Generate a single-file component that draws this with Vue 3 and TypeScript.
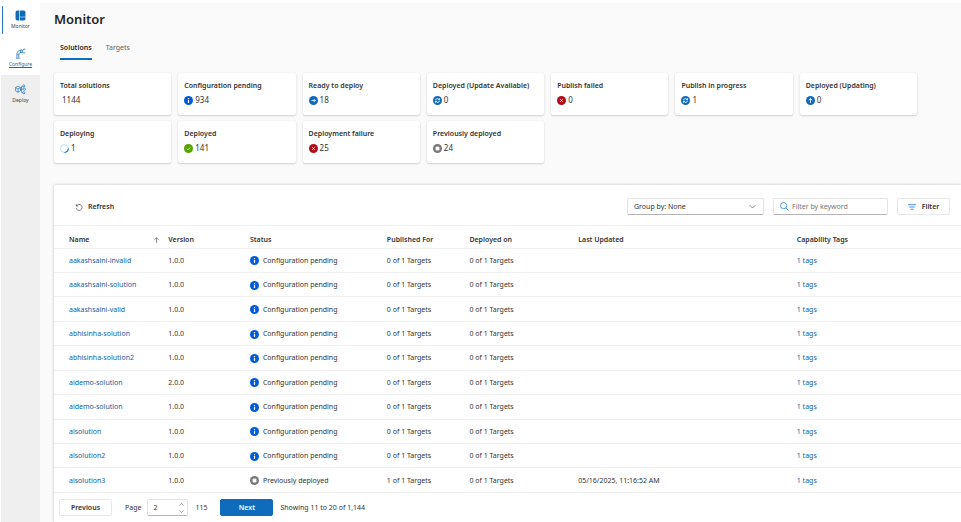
<script setup lang="ts">
import { ref } from 'vue'

type IconName = 'info' | 'arrow' | 'sync' | 'error' | 'up' | 'spinner' | 'check' | 'stopped'

interface Card {
  label: string
  value: number
  icon?: IconName
}

interface Solution {
  name: string
  version: string
  status: string
  icon: IconName
  published: string
  deployed: string
  updated: string
}

const cards: Card[] = [
  { label: 'Total solutions', value: 1144 },
  { label: 'Configuration pending', value: 934, icon: 'info' },
  { label: 'Ready to deploy', value: 18, icon: 'arrow' },
  { label: 'Deployed (Update Available)', value: 0, icon: 'sync' },
  { label: 'Publish failed', value: 0, icon: 'error' },
  { label: 'Publish in progress', value: 1, icon: 'sync' },
  { label: 'Deployed (Updating)', value: 0, icon: 'up' },
  { label: 'Deploying', value: 1, icon: 'spinner' },
  { label: 'Deployed', value: 141, icon: 'check' },
  { label: 'Deployment failure', value: 25, icon: 'error' },
  { label: 'Previously deployed', value: 24, icon: 'stopped' },
]

const pending = (name: string, version = '1.0.0'): Solution => ({
  name,
  version,
  status: 'Configuration pending',
  icon: 'info',
  published: '0 of 1 Targets',
  deployed: '0 of 1 Targets',
  updated: '',
})

const solutions: Solution[] = [
  pending('aakashsaini-invalid'),
  pending('aakashsaini-solution'),
  pending('aakashsaini-valid'),
  pending('abhisinha-solution'),
  pending('abhisinha-solution2'),
  pending('aidemo-solution', '2.0.0'),
  pending('aidemo-solution'),
  pending('aisolution'),
  pending('aisolution2'),
  {
    name: 'aisolution3',
    version: '1.0.0',
    status: 'Previously deployed',
    icon: 'stopped',
    published: '1 of 1 Targets',
    deployed: '0 of 1 Targets',
    updated: '05/16/2025, 11:16:52 AM',
  },
]

const colors: Record<IconName, string> = {
  info: '#015cda',
  arrow: '#0f6cbd',
  sync: '#0f6cbd',
  error: '#b10e1c',
  up: '#0f6cbd',
  spinner: 'none',
  check: '#57a300',
  stopped: '#7a7a7a',
}

const glyphs: Record<IconName, string> = {
  info: 'M9 7.6V14M9 4v2',
  arrow: 'M5 9h7.5M9.5 6l3 3-3 3',
  sync: 'M5 8.5c.5-4 6-4.500 7.500-1.200M13 4.500v3h-3M13 9.500c-.5 4-6 4.500-7.500 1.200M5 13.500v-3h3',
  error: 'M6.300 6.300l5.400 5.400M11.700 6.300l-5.400 5.400',
  up: 'M9 14V5M5.500 8.500L9 5l3.500 3.500',
  spinner: '',
  check: 'M5.500 9.300l2.400 2.400 4.600-4.800',
  stopped: 'M6 6h6v6H6z',
}

const groupBy = ref('none')
const keyword = ref('')
const page = ref(2)
const step = (delta: number) => {
  page.value = Math.min(115, Math.max(1, page.value + delta))
}
</script>

<template>
  <div class="app">
    <nav class="sidebar" aria-label="Primary">
      <a class="nav-item active" href="#monitor">
        <svg viewBox="0 0 20 20" fill="#0f6cbd">
          <path d="M4 1h3.500v18H4a3 3 0 0 1-3-3V4a3 3 0 0 1 3-3zM8.700 1H16a3 3 0 0 1 3 3v8.200H8.700zM8.700 13.400H19V16a3 3 0 0 1-3 3H8.700z" />
        </svg>
        <span>Monitor</span>
      </a>
      <a class="nav-item hovered" href="#configure">
        <svg viewBox="0 0 20 20" fill="none" stroke="#0f6cbd" stroke-width="1.300">
          <path d="M2 18.500h6.500M3.500 18v-6.500C3.500 7 6 4.500 10 4.500M7 18v-5.500C7 9.500 8.500 8 11 7.500M3.500 12H7M10 3.500h3v5h-3zM13 5l3-3h3M13 7l3 2h3M16 2v2" />
        </svg>
        <span>Configure</span>
      </a>
      <a class="nav-item" href="#deploy">
        <svg viewBox="0 0 20 20" fill="none" stroke="#0f6cbd" stroke-width="1.200">
          <path d="M1 6.500L5.500 4 10 6.500v6L5.500 15 1 12.500zM1 6.500L5.500 9 10 6.500M5.500 9v6M10 9.500h4M12 9.500V4.500h2M12 9.500v6h2" />
          <circle cx="16" cy="3.500" r="2" /><circle cx="17" cy="9.500" r="2" /><circle cx="16" cy="16" r="2" />
        </svg>
        <span>Deploy</span>
      </a>
    </nav>

    <main class="main">
      <h1>Monitor</h1>
      <div class="tabs" role="tablist">
        <button class="tab selected" role="tab" aria-selected="true">Solutions</button>
        <button class="tab" role="tab" aria-selected="false">Targets</button>
      </div>

      <section class="cards">
        <article v-for="card in cards" :key="card.label" class="card">
          <h2>{{ card.label }}</h2>
          <div class="value" :class="{ plain: !card.icon }">
            <svg v-if="card.icon" class="status-icon" viewBox="0 0 18 18">
              <template v-if="card.icon === 'spinner'">
                <circle cx="9" cy="9" r="8" fill="none" stroke="#b4d6fa" stroke-width="1.800" />
                <path d="M17 9A8 8 0 0 1 9 17" fill="none" stroke="#0f6cbd" stroke-width="2" />
              </template>
              <template v-else>
                <circle cx="9" cy="9" r="9" :fill="colors[card.icon]" />
                <path :d="glyphs[card.icon]" class="glyph" :class="card.icon" />
              </template>
            </svg>
            <span>{{ card.value }}</span>
          </div>
        </article>
      </section>

      <section class="panel">
        <div class="toolbar">
          <button class="refresh">
            <svg viewBox="0 0 16 16" fill="none" stroke="#424242" stroke-width="1.300">
              <path d="M2.500 2v4h4M3 5.800A6 6 0 1 1 2.300 10" />
            </svg>
            Refresh
          </button>
          <div class="select-box">
            <select v-model="groupBy" aria-label="Group by">
              <option value="none">Group by: None</option>
              <option value="status">Group by: Status</option>
            </select>
            <svg class="chevron" viewBox="0 0 16 10" fill="none" stroke="#616161" stroke-width="1.600"><path d="M1 1.500l7 7 7-7" /></svg>
          </div>
          <label class="search">
            <svg viewBox="0 0 16 16" fill="none" stroke="#2b88d8" stroke-width="1.500">
              <circle cx="6.500" cy="6.500" r="5.500" /><path d="M10.500 10.500L15.500 15.500" />
            </svg>
            <input v-model="keyword" type="text" placeholder="Filter by keyword" aria-label="Filter by keyword" />
          </label>
          <button class="button filter">
            <svg viewBox="0 0 16 12" fill="none" stroke="#2b88d8" stroke-width="1.800"><path d="M0 1.500h16M2.500 6h11M5 10.500h6" /></svg>
            Filter
          </button>
        </div>

        <div class="table-area">
          <table>
            <colgroup>
              <col class="c-name" /><col class="c-version" /><col class="c-status" /><col class="c-published" />
              <col class="c-deployed" /><col class="c-updated" /><col class="c-tags" />
            </colgroup>
            <thead>
              <tr>
                <th scope="col">
                  <div class="sortable">
                    Name
                    <svg viewBox="0 0 12 14" fill="none" stroke="#424242" stroke-width="1.400"><path d="M6 14V1.500M1 6.500l5-5 5 5" /></svg>
                  </div>
                </th>
                <th scope="col">Version</th>
                <th scope="col">Status</th>
                <th scope="col">Published For</th>
                <th scope="col">Deployed on</th>
                <th scope="col">Last Updated</th>
                <th scope="col">Capability Tags</th>
              </tr>
            </thead>
            <tbody>
              <tr v-for="(row, i) in solutions" :key="i">
                <td><a href="#solution">{{ row.name }}</a></td>
                <td>{{ row.version }}</td>
                <td>
                  <div class="status">
                    <svg class="status-icon" viewBox="0 0 18 18">
                      <circle cx="9" cy="9" r="9" :fill="colors[row.icon]" />
                      <path :d="glyphs[row.icon]" class="glyph" :class="row.icon" />
                    </svg>
                    {{ row.status }}
                  </div>
                </td>
                <td>{{ row.published }}</td>
                <td>{{ row.deployed }}</td>
                <td>{{ row.updated }}</td>
                <td><a href="#tags">1 tags</a></td>
              </tr>
            </tbody>
          </table>
        </div>

        <footer class="pager">
          <button class="button" @click="step(-1)">Previous</button>
          <label for="page">Page</label>
          <div class="spin">
            <input id="page" v-model="page" type="text" inputmode="numeric" />
            <div class="arrows">
              <button aria-label="Next page number" @click="step(1)">
                <svg viewBox="0 0 12 7" fill="none" stroke="#616161" stroke-width="1.500"><path d="M1 6l5-5 5 5" /></svg>
              </button>
              <button aria-label="Previous page number" @click="step(-1)">
                <svg viewBox="0 0 12 7" fill="none" stroke="#616161" stroke-width="1.500"><path d="M1 1l5 5 5-5" /></svg>
              </button>
            </div>
          </div>
          <span class="total">115</span>
          <button class="button primary" @click="step(1)">Next</button>
          <span class="range">Showing 11 to 20 of 1,144</span>
        </footer>
      </section>
    </main>
  </div>
</template>

<style>
body {
  background: #fff;
}
</style>

<style scoped>
* {
  box-sizing: border-box;
}

.app {
  display: flex;
  height: 100vh;
  padding: 3px 0 0 1px;
  font-family: "Noto Sans", "Open Sans", sans-serif;
  font-size: 7px;
  line-height: 10px;
  color: #333;
}

button,
input,
select {
  margin: 0;
  padding: 0;
  border: 0;
  background: none;
  font: inherit;
  color: inherit;
}

a {
  color: #115ea3;
  text-decoration: none;
}

svg {
  display: block;
  flex: none;
}

.sidebar {
  flex: none;
  width: 39px;
  background: #efefef;
}

.nav-item {
  display: flex;
  flex-direction: column;
  align-items: center;
  gap: 1px;
  height: 36px;
  padding-top: 9px;
  font-size: 5px;
  line-height: 8px;
  color: #424242;
}

.nav-item svg {
  width: 11px;
  height: 11px;
}

.nav-item.active {
  padding-top: 7px;
  background: linear-gradient(#2b7bc4, #2b7bc4) 1px 3px / 1px 28px no-repeat #fff;
}

.nav-item.hovered {
  background: #fff;
}

.nav-item.hovered span {
  color: #0f6cbd;
  text-decoration: underline;
}

.main {
  display: flex;
  flex: 1;
  flex-direction: column;
  min-width: 0;
  padding-left: 14px;
  background: #fafafa;
}

h1 {
  margin: 6px 0 10px;
  font-size: 13px;
  line-height: 20px;
  font-weight: 600;
  color: #242424;
}

.tabs {
  display: flex;
  gap: 14px;
  padding-left: 6px;
  margin-bottom: 13px;
}

.tab {
  display: flex;
  height: 21px;
  padding-top: 4px;
  border-bottom: 2px solid transparent;
  color: #616161;
}

.tab.selected {
  border-color: #0f6cbd;
  font-weight: 600;
  color: #242424;
}

.cards {
  display: grid;
  grid-template-columns: repeat(7, 1fr);
  gap: 6px 7px;
  margin-right: 44px;
}

.card {
  height: 42px;
  padding: 8px 6px;
  border-radius: 2px;
  background: #fff;
  box-shadow: 0 1px 2px rgba(0, 0, 0, 0.16), 0 0 1px rgba(0, 0, 0, 0.12);
}

.card h2 {
  margin: 0;
  font-size: 7px;
  line-height: 10px;
  font-weight: 600;
  white-space: nowrap;
}

.value {
  display: flex;
  align-items: center;
  gap: 2px;
  height: 18px;
  font-size: 8px;
  line-height: 12px;
}

.value.plain {
  padding-left: 2px;
}

.status-icon {
  width: 9px;
  height: 9px;
}

.glyph {
  fill: none;
  stroke: #fff;
  stroke-width: 1.6;
}

.glyph.info {
  stroke-width: 2.4;
}

.glyph.stopped {
  fill: #fff;
}

.panel {
  display: flex;
  flex: 1;
  flex-direction: column;
  margin-top: 22px;
  border-radius: 2px 0 0 0;
  background: #fff;
  box-shadow: 0 0 3px rgba(0, 0, 0, 0.25);
}

.toolbar {
  display: flex;
  align-items: center;
  gap: 9px;
  height: 41px;
  padding: 3px 11px 0 21px;
  border-bottom: 1px solid #f0f0f0;
}

.refresh {
  display: flex;
  align-items: center;
  gap: 5px;
  margin-right: auto;
  font-weight: 600;
}

.refresh svg {
  width: 8px;
  height: 8px;
}

.select-box,
.search,
.spin {
  display: flex;
  align-items: center;
  height: 17px;
  border: 1px solid #e4e4e4;
  border-bottom-color: #b4b4b4;
  border-radius: 2px;
  background: #fff;
}

.select-box {
  width: 137px;
  padding: 0 7px 0 6px;
}

select {
  flex: 1;
  appearance: none;
  outline: 0;
}

.chevron {
  width: 7px;
  height: 5px;
}

.search {
  width: 115px;
  gap: 3px;
  padding: 0 6px;
}

.search svg {
  width: 9px;
  height: 9px;
}

.search input {
  flex: 1;
  min-width: 0;
  outline: 0;
}

.search input::placeholder {
  color: #757575;
  opacity: 1;
}

.button {
  display: flex;
  align-items: center;
  justify-content: center;
  width: 53px;
  height: 17px;
  border: 1px solid #e8e8e8;
  border-radius: 2px;
  background: #fff;
  font-weight: 600;
}

.filter {
  gap: 6px;
}

.filter svg {
  width: 8px;
  height: 6px;
}

.table-area {
  flex: 1;
}

table {
  width: 100%;
  height: 100%;
  table-layout: fixed;
  border-collapse: collapse;
}

.c-name { width: 12.6%; }
.c-version { width: 9%; }
.c-status { width: 15.1%; }
.c-published { width: 9.1%; }
.c-deployed { width: 12%; }
.c-updated { width: 24.1%; }

th,
td {
  padding: 1px 0 0;
  border-bottom: 1px solid #f0f0f0;
  text-align: left;
  white-space: nowrap;
}

th:first-child,
td:first-child {
  padding-left: 15px;
}

th {
  height: 22px;
  padding-top: 6px;
  font-weight: 600;
}

td {
  height: 24px;
}

.sortable {
  display: flex;
  align-items: center;
  justify-content: space-between;
  padding-right: 9px;
}

.sortable svg {
  width: 5px;
  height: 6px;
}

.status {
  display: flex;
  align-items: center;
  gap: 4px;
}

.pager {
  display: flex;
  align-items: center;
  height: 29px;
  padding: 0 5px;
}

.pager label {
  margin: 0 6px 0 13px;
}

.spin {
  width: 41px;
  padding: 0 3px 0 5px;
}

.spin input {
  flex: 1;
  width: 0;
  outline: 0;
}

.arrows button {
  display: block;
  padding: 2px 0;
}

.arrows svg {
  width: 5px;
  height: 3px;
}

.total {
  margin: 0 13px 0 7px;
}

.button.primary {
  border-color: #0f6cbd;
  background: #0f6cbd;
  color: #fff;
}

.range {
  margin-left: 7px;
}
</style>
